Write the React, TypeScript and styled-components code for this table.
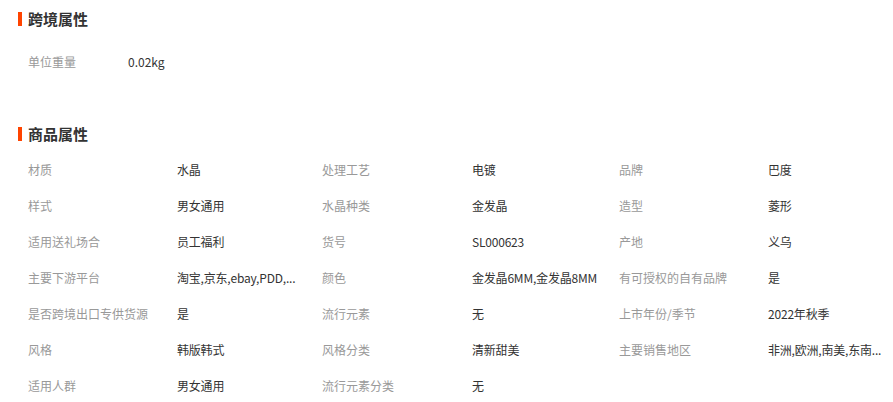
import styled, { createGlobalStyle } from 'styled-components'

const GlobalStyle = createGlobalStyle`
  body {
    margin: 0;
    background: #fff;
    font-family: "Noto Sans CJK SC", "Noto Sans", sans-serif;
    font-size: 12px;
    color: #333;
  }
`

const Page = styled.div`
  width: 893px;
  padding-top: 9px;
`

const Section = styled.section<{ $gap?: number }>`
  margin-bottom: ${p => p.$gap ?? 0}px;
`

const Title = styled.h3`
  margin: 0 0 0 18px;
  padding-left: 10px;
  position: relative;
  font-size: 15px;
  font-weight: bold;
  line-height: 20px;
  color: #333;
  &::before {
    content: '';
    position: absolute;
    left: 0;
    top: 3px;
    width: 4px;
    height: 14px;
    background: #ff4400;
  }
`

const WeightRow = styled.div`
  display: flex;
  margin-top: 23px;
  padding-left: 28px;
  line-height: 20px;
`

const WeightLabel = styled.span`
  width: 100px;
  color: #999;
`

const Grid = styled.div`
  display: grid;
  grid-template-columns: 149px 145px 150px 147px 149px 1fr;
  grid-auto-rows: 36px;
  margin-top: 7px;
  padding-left: 28px;
  align-items: center;
`

const Label = styled.div`
  color: #999;
  white-space: nowrap;
`

const Value = styled.div`
  color: #333;
  white-space: nowrap;
  letter-spacing: -0.2px;
`

const attrs: [string, string][] = [
  ['材质', '水晶'], ['处理工艺', '电镀'], ['品牌', '巴度'],
  ['样式', '男女通用'], ['水晶种类', '金发晶'], ['造型', '菱形'],
  ['适用送礼场合', '员工福利'], ['货号', 'SL000623'], ['产地', '义乌'],
  ['主要下游平台', '淘宝,京东,ebay,PDD,...'], ['颜色', '金发晶6MM,金发晶8MM'], ['有可授权的自有品牌', '是'],
  ['是否跨境出口专供货源', '是'], ['流行元素', '无'], ['上市年份/季节', '2022年秋季'],
  ['风格', '韩版韩式'], ['风格分类', '清新甜美'], ['主要销售地区', '非洲,欧洲,南美,东南...'],
  ['适用人群', '男女通用'], ['流行元素分类', '无'],
]

export default function App() {
  return (
    <Page>
      <GlobalStyle />
      <Section $gap={52}>
        <Title>跨境属性</Title>
        <WeightRow>
          <WeightLabel>单位重量</WeightLabel>
          <span>0.02kg</span>
        </WeightRow>
      </Section>
      <Section>
        <Title>商品属性</Title>
        <Grid>
          {attrs.map(([k, v]) => [
            <Label key={k + 'l'}>{k}</Label>,
            <Value key={k + 'v'}>{v}</Value>,
          ])}
        </Grid>
      </Section>
    </Page>
  )
}
